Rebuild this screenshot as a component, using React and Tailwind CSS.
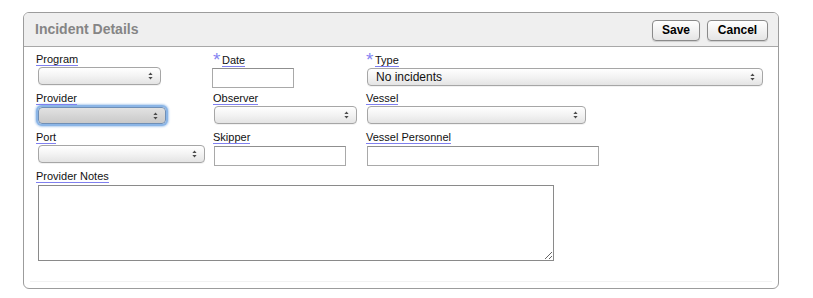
import React from "react";

const font = { fontFamily: '"Liberation Sans", Arial, sans-serif' };

function Arrows() {
  return (
    <svg width="5" height="8" viewBox="0 0 5 8" className="shrink-0">
      <path d="M2.5 0.5 L4.6 3 L0.4 3 Z" fill="#4a4a4a" />
      <path d="M2.5 7.5 L4.6 5 L0.4 5 Z" fill="#4a4a4a" />
    </svg>
  );
}

function Label({ children, star }) {
  return (
    <div className={`relative flex items-end h-[12px] ${star ? "pl-[9px] mt-[1px]" : ""}`}>
      {star && (
        <span className="absolute left-0 top-[-5px] text-[19px] leading-[19px] text-[#8585f2]">*</span>
      )}
      <span className="inline-block text-[11px] leading-[11px] text-[#111] border-b border-[#8080ef]">
        {children}
      </span>
    </div>
  );
}

function Select({ w, text, focused, ml = "ml-[2px]" }) {
  if (focused) {
    return (
      <div className={`${ml} mt-[2px] ${w} h-[17px] rounded-[4px] border border-[#6f8fb6] bg-gradient-to-b from-[#e2e2e2] to-[#c9c9c9] flex items-center justify-end pr-[7px] shadow-[0_0_0_2px_#8bb5e6,0_0_2px_3px_#b5d0ef]`}>
        <Arrows />
      </div>
    );
  }
  return (
    <div className={`${ml} mt-[1px] ${w} h-[18px] rounded-[4px] border border-[#a6a6a6] bg-gradient-to-b from-white via-[#f3f3f3] to-[#e4e4e4] flex items-center justify-between pl-[8px] pr-[7px] shadow-[0_1px_0_rgba(0,0,0,0.05)]`}>
      <span className="text-[12px] leading-none text-[#111]">{text || ""}</span>
      <Arrows />
    </div>
  );
}

function Input({ w, ml = "ml-[1px]" }) {
  return (
    <div className={`${ml} mt-[2px] ${w} h-[20px] border border-[#a9a9a9] border-t-[#8f8f8f] bg-white`} />
  );
}

function Button({ children, w }) {
  return (
    <button className={`${w} h-[21px] rounded-[4px] border border-[#8a8a8a] bg-gradient-to-b from-white to-[#e5e5e5] text-[12px] font-bold text-black leading-none shadow-[0_1px_1px_rgba(0,0,0,0.15)]`} style={font}>
      {children}
    </button>
  );
}

export default function App() {
  return (
    <div className="w-[813px] h-[298px] bg-white" style={font}>
      <div className="ml-[23px] pt-[12px]">
        <div className="w-[756px] h-[277px] border border-[#9c9c9c] rounded-[6px] overflow-hidden bg-white flex flex-col">
          <div className="h-[34px] shrink-0 bg-[#efefef] border-b border-[#a8a8a8] flex items-center justify-between pl-[11px] pr-[10px]">
            <span className="text-[14px] font-bold text-[#858585]">Incident Details</span>
            <div className="flex gap-[7px] pt-[1px]">
              <Button w="w-[48px]">Save</Button>
              <Button w="w-[61px]">Cancel</Button>
            </div>
          </div>
          <div className="flex-1 pt-[7px] pl-[12px] flex flex-col">
            <div className="flex h-[39px] items-start">
              <div className="w-[177px]">
                <Label>Program</Label>
                <Select w="w-[123px]" />
              </div>
              <div className="w-[153px]">
                <Label star>Date</Label>
                <div className="ml-[-1px] mt-[1px] w-[82px] h-[20px] border border-[#a9a9a9] border-t-[#8f8f8f] bg-white" />
              </div>
              <div className="flex-1">
                <Label star>Type</Label>
                <Select w="w-[396px]" ml="ml-[1px]" text="No incidents" />
              </div>
            </div>
            <div className="flex h-[39px] items-start">
              <div className="w-[177px]">
                <Label>Provider</Label>
                <Select w="w-[128px]" focused />
              </div>
              <div className="w-[153px]">
                <Label>Observer</Label>
                <Select w="w-[143px]" ml="ml-[1px]" />
              </div>
              <div className="flex-1">
                <Label>Vessel</Label>
                <Select w="w-[219px]" ml="ml-[1px]" />
              </div>
            </div>
            <div className="flex h-[39px] items-start">
              <div className="w-[177px]">
                <Label>Port</Label>
                <Select w="w-[167px]" />
              </div>
              <div className="w-[153px]">
                <Label>Skipper</Label>
                <Input w="w-[132px]" />
              </div>
              <div className="flex-1">
                <Label>Vessel Personnel</Label>
                <Input w="w-[232px]" />
              </div>
            </div>
            <div className="flex flex-col items-start">
              <Label>Provider Notes</Label>
              <textarea className="ml-[2px] mt-[2px] w-[516px] h-[76px] border border-[#8a8a8a] bg-white resize outline-none" />
            </div>
          </div>
          <div className="h-[7px] mx-[6px] shrink-0 border-t border-[#f2f2f2]" />
        </div>
      </div>
    </div>
  );
}
